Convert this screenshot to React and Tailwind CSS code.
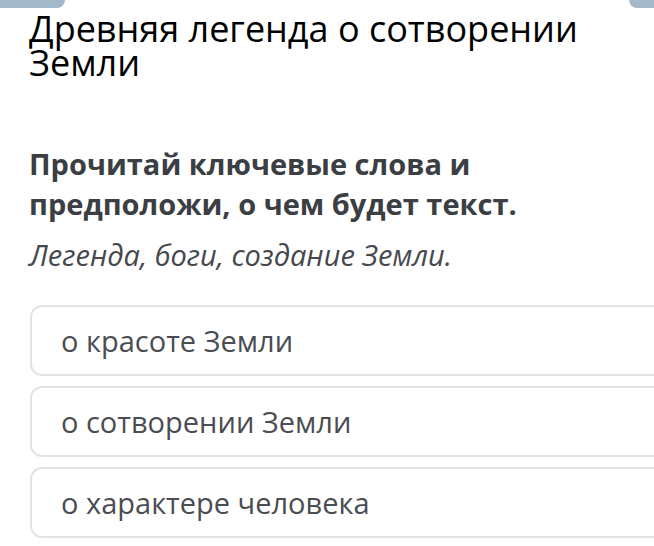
export default function App() {
    const options = ['о красоте Земли', 'о сотворении Земли', 'о характере человека'];

    return (
        <div className="w-[654px] h-[546px] overflow-hidden bg-white relative" style={{ fontFamily: '"Open Sans", "Noto Sans", sans-serif' }}>
            <div className="flex justify-between">
                <div className="w-[75px] h-[8px] bg-[#a3b8c9] rounded-b-[10px] -ml-[10px]" />
                <div className="w-[25px] h-[8px] bg-[#a3b8c9] rounded-bl-[10px]" />
            </div>
            <div className="pl-[29px]">
                <h1 className="text-[36px] leading-[34px] text-black font-normal mt-[4px]">
                    Древняя легенда о сотворении Земли
                </h1>
                <h2 className="mt-[64px] text-[29px] leading-[40px] font-bold text-[#3b3e43] w-[560px]">
                    Прочитай ключевые слова и предположи, о чем будет текст.
                </h2>
                <p className="mt-[11px] text-[29px] leading-[40px] italic text-[#45484d]">
                    Легенда, боги, создание Земли.
                </p>
            </div>
            <div className="mt-[30px] pl-[30px] flex flex-col gap-[10px]">
                {options.map((o) => (
                    <div key={o} className="h-[71px] w-[660px] border-2 border-[#e3e3e3] rounded-[12px] flex items-center pl-[29px] text-[29px] text-[#4a4d52]">
                        {o}
                    </div>
                ))}
            </div>
        </div>
    );
}
